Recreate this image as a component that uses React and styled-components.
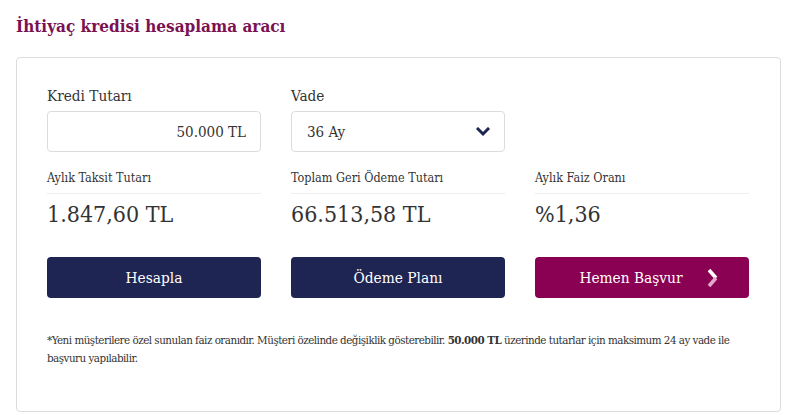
import React from "react";
import styled, { createGlobalStyle } from "styled-components";

const GlobalStyle = createGlobalStyle`
  * { box-sizing: border-box; }
  body {
    margin: 0;
    background: #fff;
    font-family: "DejaVu Serif Condensed", "Liberation Serif", serif;
    color: #333;
  }
`;

const Page = styled.div`
  padding: 17px 16px 5px 16px;
  width: 790px;
`;

const Heading = styled.h2`
  margin: 0 0 21px 0;
  font-size: 17px;
  line-height: 19px;
  font-weight: bold;
  color: #7b1152;
`;

const Card = styled.div`
  width: 765px;
  border: 1px solid #dcdcdc;
  border-radius: 4px;
  padding: 28px 30px 44px 30px;
`;

const Grid = styled.div`
  display: grid;
  grid-template-columns: repeat(3, 214px);
  column-gap: 30px;
`;

const Field = styled.div`
  display: flex;
  flex-direction: column;
`;

const Label = styled.label`
  font-size: 15.2px;
  color: #333;
  height: 25px;
  line-height: 20px;
`;

const Box = styled.div`
  height: 41px;
  border: 1px solid #dcdcdc;
  border-radius: 4px;
  display: flex;
  align-items: center;
  justify-content: ${(p) => (p.$right ? "flex-end" : "space-between")};
  padding: 0 14px 0 15px;
  font-size: 15px;
  color: #333;
`;

const Stat = styled.div`
  margin-top: 18px;
`;

const StatLabel = styled.div`
  font-size: 12.5px;
  color: #333;
  padding-bottom: 8px;
  border-bottom: 1px solid #eee;
`;

const StatValue = styled.div`
  font-size: 23px;
  line-height: 27px;
  color: #333;
  margin-top: 7px;
`;

const Button = styled.button`
  margin-top: 29px;
  height: 41px;
  border: 0;
  border-radius: 4px;
  background: ${(p) => (p.$accent ? "#8a0052" : "#1f2552")};
  color: #fff;
  font-family: inherit;
  font-size: 15.3px;
  display: flex;
  align-items: center;
  justify-content: center;
  gap: 24px;
  cursor: pointer;
  padding: ${(p) => (p.$accent ? "0 0 0 14px" : "0")};
`;

const Note = styled.p`
  margin: 33px 0 0 0;
  max-width: 692px;
  font-size: 11.5px;
  line-height: 18px;
  letter-spacing: -0.5px;
  color: #333;
  b { font-weight: bold; }
`;

const Chevron = () => (
  <svg width="14" height="10" viewBox="0 0 14 10">
    <path d="M2 2 L7 7 L12 2" fill="none" stroke="#1f2552" strokeWidth="3" strokeLinecap="square" />
  </svg>
);

const Arrow = () => (
  <svg width="12" height="20" viewBox="0 0 12 20">
    <path d="M2 2 L9 10" fill="none" stroke="#fff" strokeWidth="3.5" />
    <path d="M9 10 L2 18" fill="none" stroke="#e3a9cb" strokeWidth="3.5" />
  </svg>
);

export default function App() {
  return (
    <Page>
      <GlobalStyle />
      <Heading>İhtiyaç kredisi hesaplama aracı</Heading>
      <Card>
        <Grid>
          <Field>
            <Label>Kredi Tutarı</Label>
            <Box $right>50.000 TL</Box>
          </Field>
          <Field>
            <Label>Vade</Label>
            <Box>
              36 Ay
              <Chevron />
            </Box>
          </Field>
          <div />
          <Stat>
            <StatLabel>Aylık Taksit Tutarı</StatLabel>
            <StatValue>1.847,60 TL</StatValue>
          </Stat>
          <Stat>
            <StatLabel>Toplam Geri Ödeme Tutarı</StatLabel>
            <StatValue>66.513,58 TL</StatValue>
          </Stat>
          <Stat>
            <StatLabel>Aylık Faiz Oranı</StatLabel>
            <StatValue>%1,36</StatValue>
          </Stat>
          <Button>Hesapla</Button>
          <Button>Ödeme Planı</Button>
          <Button $accent>
            Hemen Başvur
            <Arrow />
          </Button>
        </Grid>
        <Note>
          *Yeni müşterilere özel sunulan faiz oranıdır. Müşteri özelinde değişiklik gösterebilir. <b>50.000 TL</b> üzerinde tutarlar için maksimum 24 ay vade ile başvuru yapılabilir.
        </Note>
      </Card>
    </Page>
  );
}
